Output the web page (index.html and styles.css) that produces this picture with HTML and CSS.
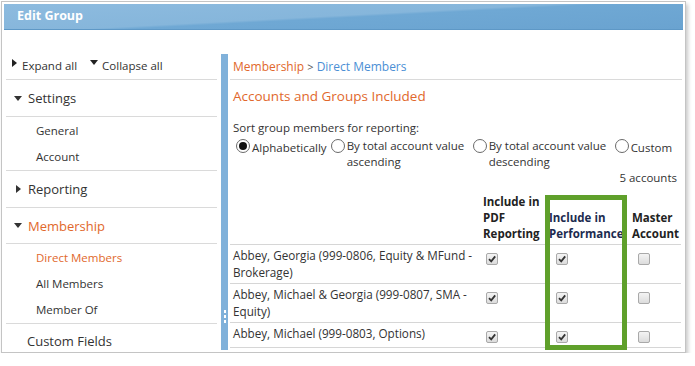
FILE: index.html
```html
<!DOCTYPE html>
<html>
<head>
<meta charset="utf-8">
<link rel="stylesheet" href="styles.css">
</head>
<body>
<div class="window">
  <div class="titlebar">Edit Group</div>
  <div class="body">
    <nav class="panel">
      <div class="toolbar">
        <span class="tool"><svg class="tri-r" width="5" height="8" viewBox="0 0 5 8"><path d="M0 0 L5 4 L0 8 Z"/></svg>Expand all</span>
        <span class="tool"><svg class="tri-d" width="8" height="5" viewBox="0 0 8 5"><path d="M0 0 L8 0 L4 5 Z"/></svg>Collapse all</span>
      </div>
      <div class="section"><svg class="sec-d" width="8" height="5" viewBox="0 0 8 5"><path d="M0 0 L8 0 L4 5 Z"/></svg>Settings</div>
      <div class="sublist">
        <div class="sub">General</div>
        <div class="sub">Account</div>
      </div>
      <div class="section"><svg class="sec-r" width="5" height="8" viewBox="0 0 5 8"><path d="M0 0 L5 4 L0 8 Z"/></svg>Reporting</div>
      <div class="section active"><svg class="sec-d" width="8" height="5" viewBox="0 0 8 5"><path d="M0 0 L8 0 L4 5 Z"/></svg>Membership</div>
      <div class="sublist">
        <div class="sub active">Direct Members</div>
        <div class="sub">All Members</div>
        <div class="sub">Member Of</div>
      </div>
      <div class="section plain">Custom Fields</div>
    </nav>
    <div class="splitter"><span class="dot"></span><span class="dot"></span><span class="dot"></span></div>
    <main class="content">
      <div class="crumbs"><span class="crumb-o">Membership</span> <span class="sep">&gt;</span> <span class="crumb-b">Direct Members</span></div>
      <h1 class="heading">Accounts and Groups Included</h1>
      <div class="sortlabel">Sort group members for reporting:</div>
      <div class="radios">
        <div class="opt"><span class="radio on"></span><span class="lbl single">Alphabetically</span></div>
        <div class="opt"><span class="radio"></span><span class="lbl w2">By total account value ascending</span></div>
        <div class="opt"><span class="radio"></span><span class="lbl w3">By total account value descending</span></div>
        <div class="opt"><span class="radio"></span><span class="lbl single">Custom</span></div>
      </div>
      <div class="count">5 accounts</div>
      <div class="tablewrap">
        <table class="grid">
          <colgroup><col class="c-name"><col class="c-pdf"><col class="c-perf"><col class="c-master"></colgroup>
          <thead>
            <tr><th></th><th>Include in PDF Reporting</th><th class="perf-h">Include in Performance</th><th>Master Account</th></tr>
          </thead>
          <tbody>
            <tr><td>Abbey, Georgia (999-0806, Equity &amp; MFund - Brokerage)</td>
              <td class="cb-cell"><span class="cb"><svg width="10" height="10" viewBox="0 0 10 10"><path d="M2 5.2 L4.2 7.4 L8.2 2.4"/></svg></span></td>
              <td class="cb-cell perf"><span class="cb"><svg width="10" height="10" viewBox="0 0 10 10"><path d="M2 5.2 L4.2 7.4 L8.2 2.4"/></svg></span></td>
              <td class="cb-cell master"><span class="cb"></span></td></tr>
            <tr><td>Abbey, Michael &amp; Georgia (999-0807, SMA - Equity)</td>
              <td class="cb-cell"><span class="cb"><svg width="10" height="10" viewBox="0 0 10 10"><path d="M2 5.2 L4.2 7.4 L8.2 2.4"/></svg></span></td>
              <td class="cb-cell perf"><span class="cb"><svg width="10" height="10" viewBox="0 0 10 10"><path d="M2 5.2 L4.2 7.4 L8.2 2.4"/></svg></span></td>
              <td class="cb-cell master"><span class="cb"></span></td></tr>
            <tr><td>Abbey, Michael (999-0803, Options)</td>
              <td class="cb-cell"><span class="cb"><svg width="10" height="10" viewBox="0 0 10 10"><path d="M2 5.2 L4.2 7.4 L8.2 2.4"/></svg></span></td>
              <td class="cb-cell perf"><span class="cb"><svg width="10" height="10" viewBox="0 0 10 10"><path d="M2 5.2 L4.2 7.4 L8.2 2.4"/></svg></span></td>
              <td class="cb-cell master"><span class="cb"></span></td></tr>
          </tbody>
        </table>
        <div class="highlight"></div>
      </div>
    </main>
  </div>
</div>
</body>
</html>
```

FILE: styles.css
```css
* { box-sizing: border-box; }
html, body { margin: 0; padding: 0; background: #fff; }
body {
  font-family: "Open Sans", "Noto Sans", sans-serif;
  color: #333;
  overflow: hidden;
}
.window {
  width: 685px;
  height: 352px;
  margin: 1px 0 0 1px;
  border: 1px solid #c4c4c4;
  padding: 2px;
  background: #fff;
  box-shadow: 2px 3px 4px rgba(0,0,0,0.22);
  display: flex;
  flex-direction: column;
}
.titlebar {
  height: 26px;
  flex: none;
  padding-left: 13px;
  color: #fff;
  font-weight: 700;
  font-size: 12.5px;
  line-height: 24px;
  background: linear-gradient(177deg, #8dbbdf 0%, #86b6db 48%, #6fa8d4 52%, #6aa3d0 100%);
  border-bottom: 1px solid #5e98c6;
}
.body {
  flex: 1;
  min-height: 0;
  display: flex;
  padding: 24px 0 0 2px;
}
.panel {
  width: 211px;
  flex: none;
  display: flex;
  flex-direction: column;
}
.toolbar {
  height: 26px;
  flex: none;
  border-bottom: 1px solid #dadada;
  display: flex;
  align-items: center;
  padding: 0 0 3px 6px;
  font-size: 11.5px;
  gap: 13px;
}
.tool { display: flex; align-items: center; }
.tool svg { fill: #222; margin-right: 5px; }
.tool .tri-r { position: relative; top: -2px; }
.tool .tri-d { position: relative; top: -3px; margin-right: 4px; }
.section {
  flex: none;
  height: 37px;
  border-bottom: 1px solid #dadada;
  display: flex;
  align-items: center;
  padding-left: 8px;
  font-size: 13px;
  color: #333;
}
.section svg { fill: #333; }
.section .sec-d { margin-right: 6px; }
.section .sec-r { margin-left: 2px; margin-right: 7px; }
.section.active { color: #e1682c; height: 36px; }
.section.plain {
  display: block;
  padding: 8px 0 0 21px;
  line-height: 18px;
  border-bottom: none;
  height: auto;
}
.sublist {
  flex: none;
  border-bottom: 1px solid #dadada;
  padding: 1px 0 0 30px;
}
.sub {
  height: 26px;
  line-height: 26px;
  font-size: 11.5px;
  color: #333;
}
.sub.active { color: #e1682c; }
.splitter {
  width: 7px;
  flex: none;
  margin-left: 4px;
  background: #80b1da;
  display: flex;
  flex-direction: column;
  justify-content: flex-end;
  align-items: center;
  padding-bottom: 27px;
  gap: 2px;
}
.dot { width: 2px; height: 3px; background: #fff; }
.content {
  flex: 1;
  min-width: 0;
  padding: 0 1px 0 2px;
}
.crumbs {
  height: 26px;
  line-height: 25px;
  border-bottom: 1px solid #dadada;
  padding-left: 3px;
  font-size: 12px;
}
.crumb-o { color: #e1682c; }
.sep { color: #555; font-size: 11px; }
.crumb-b { color: #4b8fd5; }
.heading {
  margin: 0;
  height: 32px;
  line-height: 32px;
  font-weight: 400;
  font-size: 13.5px;
  color: #e1682c;
  padding-left: 3px;
}
.sortlabel {
  margin-top: 8px;
  line-height: 16px;
  font-size: 11.5px;
  padding-left: 3px;
  color: #333;
}
.radios {
  display: flex;
  margin-top: 2px;
  padding-left: 6px;
  font-size: 11.5px;
  line-height: 16px;
  color: #333;
}
.opt { display: flex; align-items: flex-start; }
.radio {
  width: 14px;
  height: 14px;
  border: 1px solid #6a6a6a;
  border-radius: 50%;
  margin-top: 1px;
  margin-right: 2px;
  flex: none;
  background: #fff;
  display: flex;
  align-items: center;
  justify-content: center;
}
.radio.on::after {
  content: "";
  width: 8px;
  height: 8px;
  border-radius: 50%;
  background: #111;
}
.lbl.single { padding-top: 2px; margin-right: 4px; }
.lbl.w2 { width: 121px; margin-right: 5px; }
.lbl.w3 { width: 120px; margin-right: 6px; }
.count {
  text-align: right;
  padding-right: 5px;
  line-height: 16px;
  font-size: 11.5px;
  color: #333;
}
.tablewrap { position: relative; }
.grid {
  width: 451px;
  border-collapse: collapse;
  table-layout: fixed;
  font-size: 11.7px;
}
.c-name { width: 250px; }
.c-pdf { width: 66px; }
.c-perf { width: 83px; }
.c-master { width: 52px; }
.grid th {
  text-align: left;
  vertical-align: bottom;
  font-weight: 700;
  font-size: 11.5px;
  color: #222;
  line-height: 16px;
  padding: 8px 3px 2px 3px;
  border-bottom: 1px solid #d6d6d6;
}
.grid th.perf-h { color: #1c2b4f; }
.grid td {
  vertical-align: top;
  line-height: 17px;
  padding: 2px 3px 2px;
  height: 25px;
  border-bottom: 1px solid #d6d6d6;
  color: #333;
}
.grid td.cb-cell { padding-left: 6px; }
.grid td.perf { padding-left: 10px; }
.grid td.master { padding-left: 9px; }
.cb {
  display: flex;
  align-items: center;
  justify-content: center;
  width: 12px;
  height: 12px;
  margin-top: 6px;
  border: 1px solid #a9a9a9;
  border-radius: 2px;
  background: linear-gradient(#f4f4f4, #dcdcdc);
}
.cb svg path { fill: none; stroke: #333; stroke-width: 1.8; }
.highlight {
  position: absolute;
  left: 315px;
  top: 9px;
  width: 82px;
  height: 155px;
  border: 5px solid #5fa02b;
  pointer-events: none;
}
```
